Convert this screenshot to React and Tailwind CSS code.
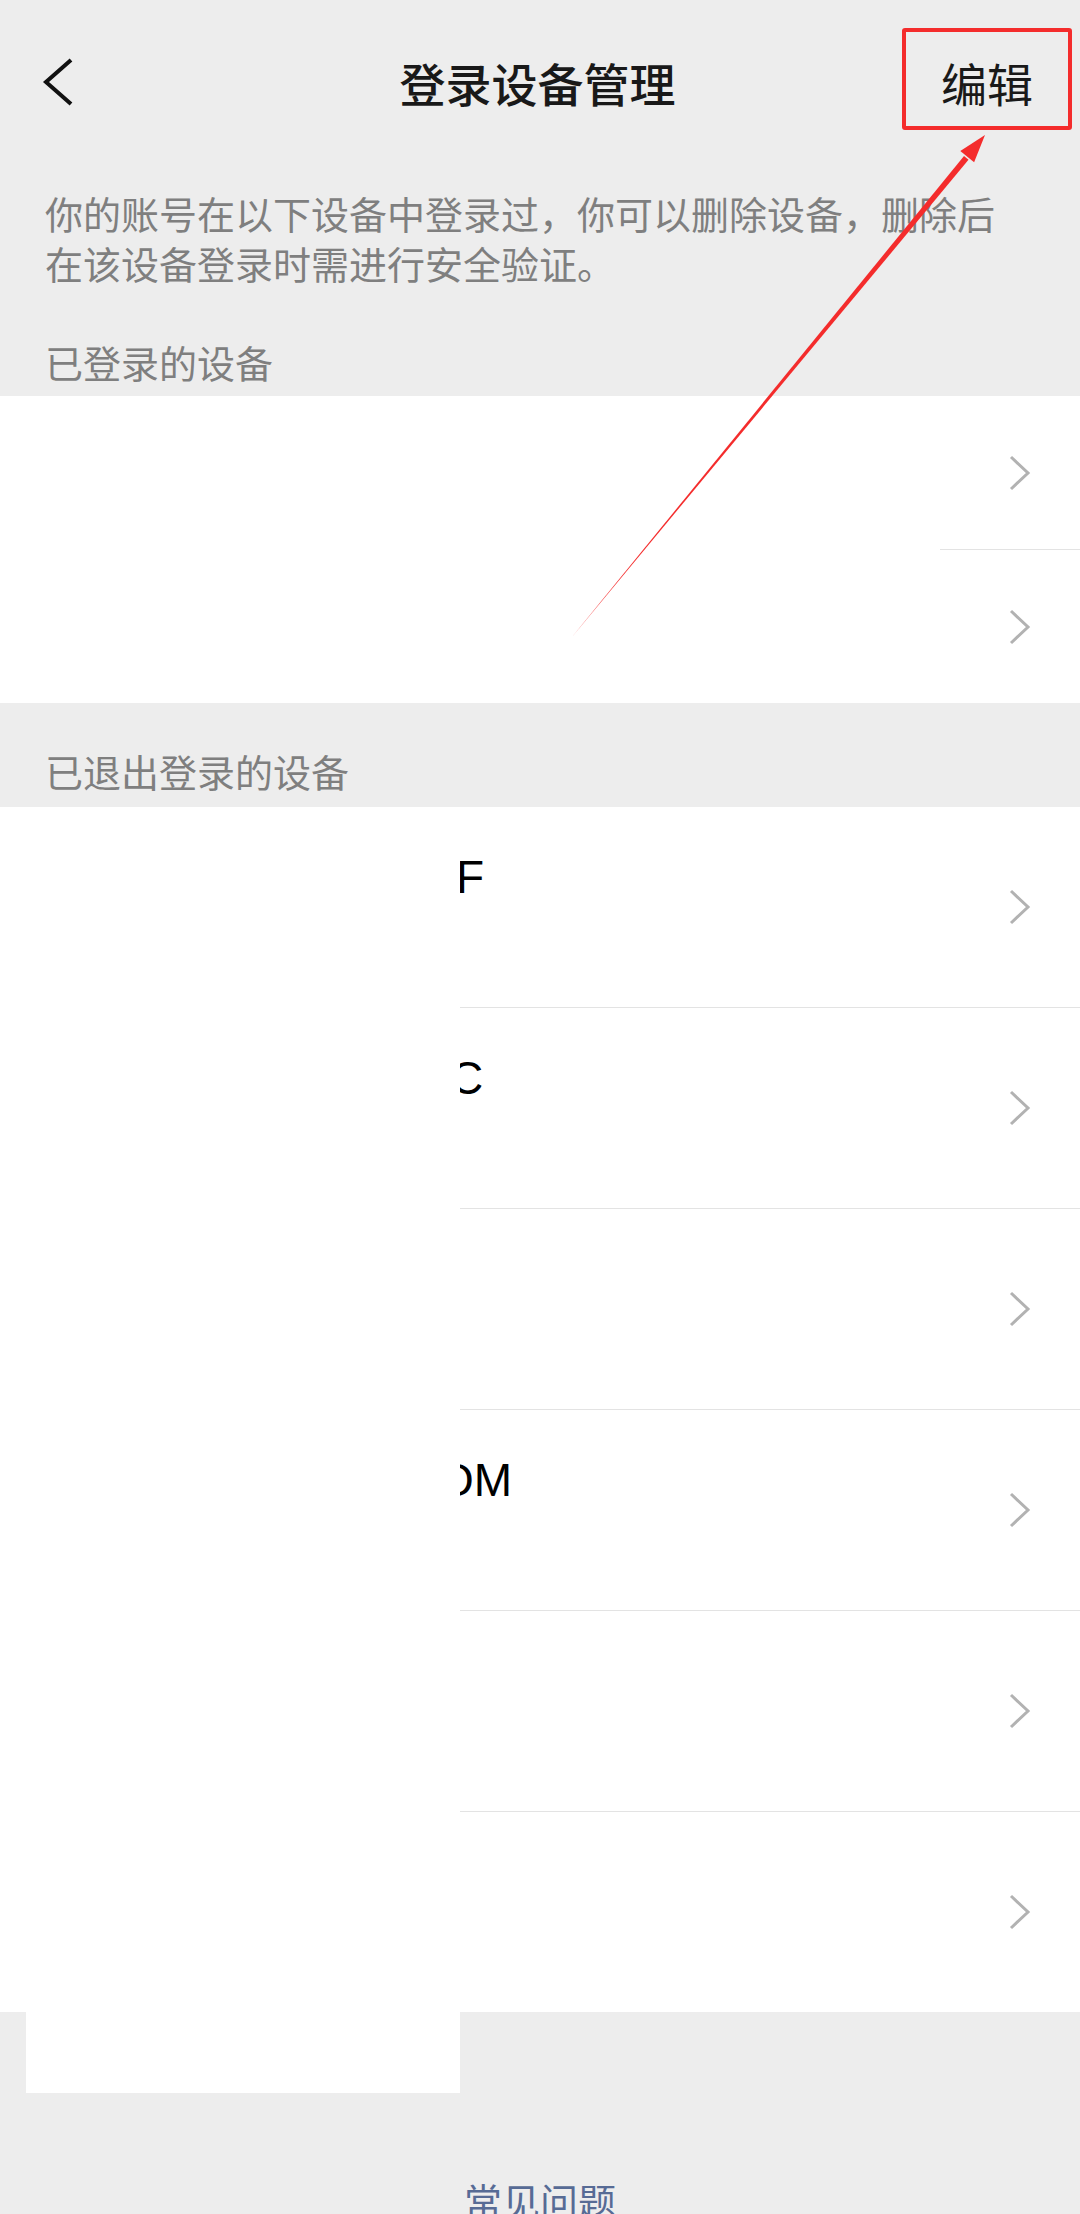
import React from "react";

// device rows: only the visible tail of each name is left after the redaction
const loggedOut = [
  { name: "F", pad: "pl-[456px]" },
  { name: "C", pad: "pl-[450px]" },
  { name: "", pad: "pl-[45px]" },
  { name: "OM", pad: "pl-[438px]" },
  { name: "", pad: "pl-[45px]" },
  { name: "", pad: "pl-[45px]" },
];

function Chevron() {
  return (
    <svg width="24" height="36" viewBox="0 0 24 36" fill="none" className="shrink-0">
      <path d="M3 2 L20 18 L3 34" stroke="#b2b2b2" strokeWidth="3" strokeLinejoin="miter" />
    </svg>
  );
}

function Divider() {
  return <div className="ml-[45px] h-px bg-[#e3e3e3]" />;
}

export default function App() {
  return (
    <div className="relative h-[2214px] w-[1080px] overflow-hidden bg-[#ededed] font-['Noto_Sans_CJK_SC',sans-serif]">
      {/* Header */}
      <div className="grid h-[164px] grid-cols-[1fr_auto_1fr] items-center pl-[42px] pr-[47px]">
        <svg width="32" height="50" viewBox="0 0 32 50" fill="none">
          <path d="M29 3 L4 25 L29 47" stroke="#111" strokeWidth="4" />
        </svg>
        <div className="text-[46px] font-medium text-[#191919]">登录设备管理</div>
        <div className="justify-self-end text-[46px] text-[#191919]">编辑</div>
      </div>

      {/* Description */}
      <p className="pl-[45px] pr-[60px] pt-[24px] text-[38px] leading-[50px] text-[#7f7f7f]">
        你的账号在以下设备中登录过，你可以删除设备，删除后在该设备登录时需进行安全验证。
      </p>

      <div className="px-[45px] pt-[49px] pb-[9px] text-[38px] leading-[50px] text-[#7f7f7f]">已登录的设备</div>

      {/* Logged-in devices */}
      <div className="bg-white">
        <div className="flex h-[153px] items-center justify-end pr-[48px]">
          <Chevron />
        </div>
        <Divider />
        <div className="flex h-[153px] items-center justify-end pr-[48px]">
          <Chevron />
        </div>
      </div>

      <div className="px-[45px] pt-[43px] pb-[11px] text-[38px] leading-[50px] text-[#7f7f7f]">已退出登录的设备</div>

      {/* Logged-out devices */}
      <div className="bg-white">
        {loggedOut.map((d, i) => (
          <React.Fragment key={i}>
            {i > 0 && <Divider />}
            <div className="flex h-[200px] items-center pr-[48px]">
              <div className="flex flex-1 flex-col">
                <div className={`${d.pad} h-[60px] font-['Liberation_Sans',sans-serif] text-[46px] leading-[60px] text-black`}>
                  {d.name}
                </div>
                <div className="h-[60px]" />
              </div>
              <Chevron />
            </div>
          </React.Fragment>
        ))}
      </div>

      <div className="mt-[163px] text-center text-[38px] leading-[50px] text-[#576b95]">常见问题</div>

      {/* Redaction patches */}
      <div className="absolute left-0 top-[397px] h-[306px] w-[940px] bg-white" />
      <div className="absolute left-[26px] top-[808px] h-[1285px] w-[434px] bg-white" />

      {/* Annotation: red box and arrow */}
      <div className="absolute left-[902px] top-[28px] h-[102px] w-[170px] rounded-[3px] border-[4px] border-[#f42c2c]" />
      <svg className="pointer-events-none absolute left-0 top-0" width="1080" height="2214" viewBox="0 0 1080 2214">
        <polygon points="572,637 968.5,159.8 964,156" fill="#f42c2c" />
        <polygon points="985,135 974.1,162.3 960.3,150.9" fill="#f42c2c" />
      </svg>
    </div>
  );
}
